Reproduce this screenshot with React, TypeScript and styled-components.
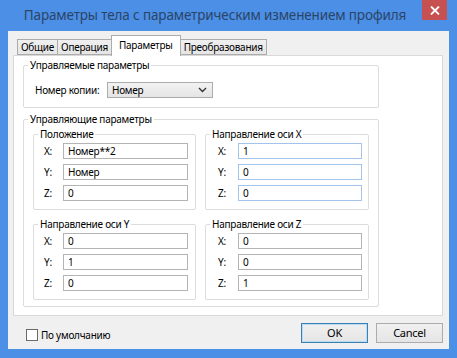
import styled, { createGlobalStyle } from "styled-components"

const GlobalStyle = createGlobalStyle`
  html, body {
    margin: 0;
    padding: 0;
    background: #4c8fe6;
  }
  * {
    box-sizing: border-box;
  }
`

const tabs = ["Общие", "Операция", "Параметры", "Преобразования"]

interface AxisRow {
  axis: string
  value: string
}

interface AxisGroupData {
  title: string
  rows: AxisRow[]
  tone?: "blue"
}

const groups: AxisGroupData[] = [
  {
    title: "Положение",
    rows: [
      { axis: "X:", value: "Номер**2" },
      { axis: "Y:", value: "Номер" },
      { axis: "Z:", value: "0" },
    ],
  },
  {
    title: "Направление оси X",
    tone: "blue",
    rows: [
      { axis: "X:", value: "1" },
      { axis: "Y:", value: "0" },
      { axis: "Z:", value: "0" },
    ],
  },
  {
    title: "Направление оси Y",
    rows: [
      { axis: "X:", value: "0" },
      { axis: "Y:", value: "1" },
      { axis: "Z:", value: "0" },
    ],
  },
  {
    title: "Направление оси Z",
    rows: [
      { axis: "X:", value: "0" },
      { axis: "Y:", value: "0" },
      { axis: "Z:", value: "1" },
    ],
  },
]

function AxisGroup({ group, index }: { group: AxisGroupData; index: number }) {
  const right = index % 2 === 1
  return (
    <GroupBox>
      <Legend>{group.title}</Legend>
      <Rows $right={right}>
        {group.rows.map((row) => (
          <Row key={row.axis} $right={right}>
            <span>{row.axis}</span>
            <TextBox $tone={group.tone}>{row.value}</TextBox>
          </Row>
        ))}
      </Rows>
    </GroupBox>
  )
}

function App() {
  return (
    <Window>
      <GlobalStyle />
      <TitleBar>
        <Title>Параметры тела с параметрическим изменением профиля</Title>
        <CloseButton>
          <svg width="10" height="9" viewBox="0 0 10 9">
            <path d="M1 0.5 L9 8.5 M9 0.5 L1 8.5" stroke="#fff" strokeWidth="1.8" />
          </svg>
        </CloseButton>
      </TitleBar>
      <Client>
        <TabStrip>
          {tabs.map((t) => (
            <Tab key={t} $active={t === "Параметры"}>{t}</Tab>
          ))}
        </TabStrip>
        <Panel>
          <GroupBox>
            <Legend>Управляемые параметры</Legend>
            <CopyRow>
              <span>Номер копии:</span>
              <Select>
                <span>Номер</span>
                <svg width="9" height="6" viewBox="0 0 9 6">
                  <path d="M1 1 L4.5 4.5 L8 1" stroke="#333" strokeWidth="1.4" fill="none" />
                </svg>
              </Select>
            </CopyRow>
          </GroupBox>
          <GroupBox>
            <Legend>Управляющие параметры</Legend>
            <SubGrid>
              {groups.map((g, i) => (
                <AxisGroup key={g.title} group={g} index={i} />
              ))}
            </SubGrid>
          </GroupBox>
        </Panel>
        <Footer>
          <CheckLabel>
            <CheckBox />
            По умолчанию
          </CheckLabel>
          <Buttons>
            <DialogButton $primary>OK</DialogButton>
            <DialogButton>Cancel</DialogButton>
          </Buttons>
        </Footer>
      </Client>
    </Window>
  )
}

const Window = styled.div`
  width: 457px;
  height: 358px;
  background: #4c8fe6;
  display: flex;
  flex-direction: column;
  font-family: "Noto Sans", "Open Sans", sans-serif;
  font-size: 10px;
  letter-spacing: -0.25px;
  color: #000;
`

const TitleBar = styled.div`
  height: 31px;
  display: flex;
  align-items: flex-start;
  padding-left: 8px;
  padding-right: 10px;
`

const Title = styled.div`
  flex: 1;
  text-align: center;
  font-size: 13.5px;
  letter-spacing: -0.15px;
  line-height: 30px;
  color: #2b4566;
  white-space: nowrap;
`

const CloseButton = styled.div`
  width: 25px;
  height: 20px;
  background: #c75050;
  display: flex;
  align-items: center;
  justify-content: center;
`

const Client = styled.div`
  flex: 1;
  margin: 0 8px 9px 8px;
  background: #f0f0f0;
  display: flex;
  flex-direction: column;
  padding: 4px 6px 0 5px;
`

const TabStrip = styled.div`
  display: flex;
  align-items: flex-end;
  height: 20px;
  padding-left: 5px;
  position: relative;
  z-index: 1;
`

const Tab = styled.div<{ $active?: boolean }>`
  height: ${(p) => (p.$active ? "21px" : "16px")};
  margin-bottom: ${(p) => (p.$active ? "-1px" : "0")};
  margin-left: -1px;
  padding: ${(p) => (p.$active ? "3px 7px 0" : "1px 3px 0")};
  border: 1px solid #acacac;
  border-bottom: ${(p) => (p.$active ? "none" : "1px solid #acacac")};
  background: ${(p) => (p.$active ? "#fff" : "linear-gradient(#f0f0f0, #e5e5e5)")};
  line-height: 13px;
  white-space: nowrap;
`

const Panel = styled.div`
  height: 261px;
  background: #fff;
  border: 1px solid #d9d9d9;
  display: flex;
  flex-direction: column;
  gap: 4px;
  padding: 2px 63px 0 9px;
`

const GroupBox = styled.fieldset`
  margin: 0;
  min-width: 0;
  padding: 0;
  border: 1px solid #dcdcdc;
  border-radius: 2px;
`

const Legend = styled.legend`
  padding: 0 2px;
  margin-left: 4px;
  line-height: 14px;
  white-space: nowrap;
`

const CopyRow = styled.div`
  display: grid;
  grid-template-columns: 72px 106px;
  align-items: center;
  padding: 10px 0 9px 11px;
`

const Select = styled.div`
  height: 16px;
  border: 1px solid #acacac;
  background: linear-gradient(#f2f2f2, #e5e5e5);
  display: flex;
  align-items: center;
  justify-content: space-between;
  padding: 0 5px 0 4px;
  line-height: 14px;
`

const SubGrid = styled.div`
  display: grid;
  grid-template-columns: 163px 164px;
  column-gap: 9px;
  row-gap: 7px;
  padding: 1px 9px 6px 9px;
`

const Rows = styled.div<{ $right?: boolean }>`
  display: flex;
  flex-direction: column;
  gap: 5px;
  padding: ${(p) => (p.$right ? "2px 6px 8px 12px" : "2px 7px 8px 10px")};
`

const Row = styled.div<{ $right?: boolean }>`
  display: grid;
  grid-template-columns: ${(p) => (p.$right ? "20px" : "19px")} 1fr;
  align-items: center;
  line-height: 14px;
`

const TextBox = styled.div<{ $tone?: "blue" }>`
  height: 16px;
  border: 1px solid ${(p) => (p.$tone === "blue" ? "#a3c4ea" : "#b4b4b4")};
  background: #fff;
  padding-left: 4px;
  line-height: 14px;
  white-space: nowrap;
`

const Footer = styled.div`
  flex: 1;
  display: flex;
  align-items: center;
  justify-content: space-between;
  padding: 0 0 0 13px;
`

const CheckLabel = styled.label`
  display: flex;
  align-items: center;
  gap: 3px;
  margin-top: 5px;
`

const CheckBox = styled.span`
  width: 12px;
  height: 12px;
  border: 1px solid #6a6a6a;
  background: #fff;
`

const Buttons = styled.div`
  display: flex;
  gap: 8px;
`

const DialogButton = styled.div<{ $primary?: boolean }>`
  width: 67px;
  height: 20px;
  border: 1px solid ${(p) => (p.$primary ? "#3c7fb1" : "#acacac")};
  box-shadow: ${(p) => (p.$primary ? "inset 0 0 0 1px #b8dcf5" : "none")};
  background: linear-gradient(#f0f0f0, #e5e5e5);
  display: flex;
  align-items: center;
  justify-content: center;
  font-size: 11px;
`

export default App
